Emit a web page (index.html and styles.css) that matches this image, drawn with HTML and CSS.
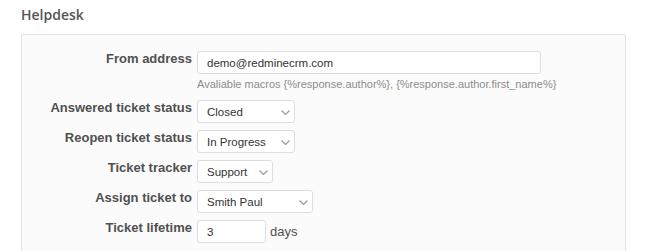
FILE: index.html
```html
<!DOCTYPE html>
<html>
<head>
<meta charset="utf-8">
<link rel="stylesheet" href="styles.css">
</head>
<body>
<h3 class="title">Helpdesk</h3>
<div class="box">
  <div class="row">
    <label class="lbl">From address</label>
    <div class="field">
      <input class="text wide" type="text" value="demo@redminecrm.com">
      <div class="hint">Avaliable macros {%response.author%}, {%response.author.first_name%}</div>
    </div>
  </div>
  <div class="row">
    <label class="lbl">Answered ticket status</label>
    <div class="field">
      <span class="sel w98"><select><option>Closed</option></select><svg class="chev" width="9" height="5" viewBox="0 0 9 5"><path d="M0.5 0.5 L4.5 4.5 L8.5 0.5" fill="none" stroke="#9a9a9a" stroke-width="1.2"/></svg></span>
    </div>
  </div>
  <div class="row">
    <label class="lbl">Reopen ticket status</label>
    <div class="field">
      <span class="sel w98"><select><option>In Progress</option></select><svg class="chev" width="9" height="5" viewBox="0 0 9 5"><path d="M0.5 0.5 L4.5 4.5 L8.5 0.5" fill="none" stroke="#9a9a9a" stroke-width="1.2"/></svg></span>
    </div>
  </div>
  <div class="row">
    <label class="lbl">Ticket tracker</label>
    <div class="field">
      <span class="sel w76"><select><option>Support</option></select><svg class="chev" width="9" height="5" viewBox="0 0 9 5"><path d="M0.5 0.5 L4.5 4.5 L8.5 0.5" fill="none" stroke="#9a9a9a" stroke-width="1.2"/></svg></span>
    </div>
  </div>
  <div class="row">
    <label class="lbl">Assign ticket to</label>
    <div class="field">
      <span class="sel w116"><select><option>Smith Paul</option></select><svg class="chev" width="9" height="5" viewBox="0 0 9 5"><path d="M0.5 0.5 L4.5 4.5 L8.5 0.5" fill="none" stroke="#9a9a9a" stroke-width="1.2"/></svg></span>
    </div>
  </div>
  <div class="row">
    <label class="lbl">Ticket lifetime</label>
    <div class="field inline">
      <input class="text short" type="text" value="3">
      <span class="unit">days</span>
    </div>
  </div>
</div>
</body>
</html>
```
FILE: styles.css
```css
html, body {
  margin: 0;
  padding: 0;
  background: #ffffff;
}
body {
  font-family: "Liberation Sans", Arial, sans-serif;
  font-size: 13px;
  color: #505050;
  padding: 0 21px;
  height: 251px;
  overflow: hidden;
}
.title {
  font-family: "Open Sans", "DejaVu Sans", sans-serif;
  font-weight: 600;
  font-size: 14px;
  color: #555555;
  margin: 0;
  padding-top: 5px;
  height: 29px;
  line-height: 20px;
}
.box {
  box-sizing: border-box;
  width: 605px;
  height: 217px;
  background: #fbfbfb;
  border: 1px solid #e3e3e3;
  border-bottom: 0;
  border-top-right-radius: 3px;
  padding-top: 16px;
}
.row {
  display: flex;
  align-items: flex-start;
  margin-bottom: 7px;
}
.row:nth-child(n+3) {
  margin-top: 0.25px;
}
.lbl {
  width: 170px;
  text-align: right;
  font-weight: bold;
  font-size: 13px;
  line-height: 16px;
  color: #505050;
  flex: none;
}
.field {
  margin-left: 5px;
}
.field.inline {
  display: flex;
  align-items: center;
}
.text {
  box-sizing: border-box;
  height: 23px;
  border: 1px solid #dedede;
  border-radius: 3px;
  background: #fff;
  font-family: "Liberation Sans", Arial, sans-serif;
  font-size: 11.5px;
  color: #333;
  padding: 0 9px;
  margin: 0;
  outline: none;
}
.wide { width: 344px; }
.short { width: 69px; }
.hint {
  font-size: 11px;
  color: #8c8c8c;
  line-height: 16px;
  margin-top: 2px;
  margin-bottom: 1px;
}
.unit {
  margin-left: 4px;
  font-size: 13px;
  color: #505050;
}
.sel {
  position: relative;
  display: inline-block;
  height: 23px;
}
.sel select {
  -webkit-appearance: none;
  appearance: none;
  box-sizing: border-box;
  width: 100%;
  height: 23px;
  border: 1px solid #dedede;
  border-radius: 3px;
  background: #fff;
  font-family: "Liberation Sans", Arial, sans-serif;
  font-size: 11.5px;
  color: #333;
  padding: 0 20px 0 9px;
  margin: 0;
  outline: none;
}
.chev {
  position: absolute;
  right: 5px;
  top: 10px;
  pointer-events: none;
}
.w98 { width: 98px; }
.w76 { width: 76px; }
.w116 { width: 116px; }
```
